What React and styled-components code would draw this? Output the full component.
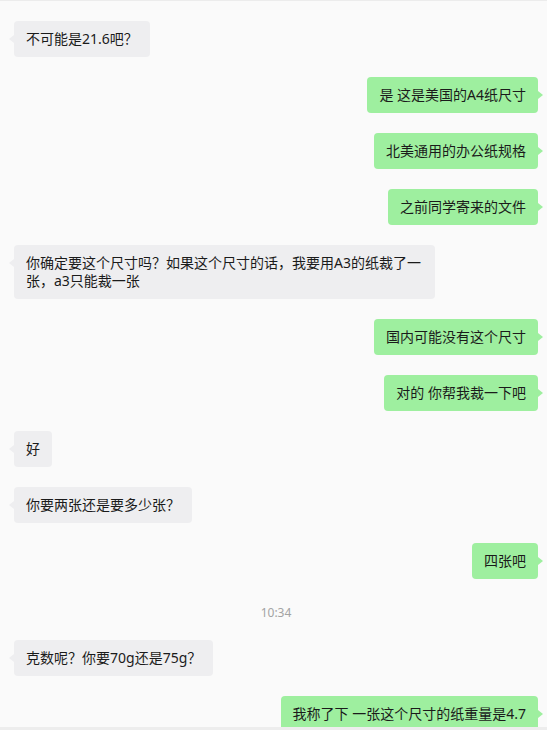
import React from "react";
import styled, { createGlobalStyle } from "styled-components";

const Global = createGlobalStyle`
  html, body { margin: 0; padding: 0; background: #fafafa; }
  body { font-family: "Segoe UI", "Noto Sans", "Noto Sans CJK SC", sans-serif; }
`;

const Window = styled.div`
  height: 730px;
  display: flex;
  flex-direction: column;
  background: #fafafa;
  border-top: 1px solid #ececec;
  box-sizing: border-box;
  overflow: hidden;
`;

const Messages = styled.div`
  flex: 1;
  min-height: 0;
  overflow: hidden;
  display: flex;
  flex-direction: column;
  gap: 20px;
  padding: 20px 9px 0 14px;
`;

const Row = styled.div`
  display: flex;
  flex-shrink: 0;
  justify-content: ${(p) => (p.$mine ? "flex-end" : "flex-start")};
`;

const Bubble = styled.div`
  position: relative;
  max-width: 397px;
  padding: 9px 12px;
  border-radius: 4px;
  font-size: 14px;
  line-height: 18px;
  color: #1b1b1b;
  font-family: "Segoe UI", "Noto Sans", "Noto Sans CJK SC", sans-serif;
  background: ${(p) => (p.$mine ? "#9eef9f" : "#eeeef0")};
  word-break: break-all;

  &::before {
    content: "";
    position: absolute;
    top: 14px;
    border-top: 4px solid transparent;
    border-bottom: 4px solid transparent;
    ${(p) =>
      p.$mine
        ? `right: -5px; border-left: 5px solid #9eef9f;`
        : `left: -5px; border-right: 5px solid #eeeef0;`}
  }
`;

const Time = styled.div`
  flex-shrink: 0;
  padding-top: 6px;
  text-align: center;
  font-size: 12px;
  line-height: 15px;
  color: #a3a3a3;
  font-family: "Segoe UI", "Noto Sans", sans-serif;
`;

const BottomBar = styled.div`
  height: 3px;
  flex-shrink: 0;
  background: #ededed;
`;

const items = [
  { t: "不可能是21.6吧？" },
  { t: "是 这是美国的A4纸尺寸", m: true },
  { t: "北美通用的办公纸规格", m: true },
  { t: "之前同学寄来的文件", m: true },
  { t: "你确定要这个尺寸吗？如果这个尺寸的话，我要用A3的纸裁了一张，a3只能裁一张" },
  { t: "国内可能没有这个尺寸", m: true },
  { t: "对的 你帮我裁一下吧", m: true },
  { t: "好" },
  { t: "你要两张还是要多少张？" },
  { t: "四张吧", m: true },
  { time: "10:34" },
  { t: "克数呢？你要70g还是75g？" },
  { t: "我称了下 一张这个尺寸的纸重量是4.7", m: true },
];

export default function App() {
  return (
    <>
      <Global />
      <Window>
        <Messages>
          {items.map((it, i) =>
            it.time ? (
              <Time key={i}>{it.time}</Time>
            ) : (
              <Row key={i} $mine={it.m}>
                <Bubble $mine={it.m}>{it.t}</Bubble>
              </Row>
            )
          )}
        </Messages>
        <BottomBar />
      </Window>
    </>
  );
}
